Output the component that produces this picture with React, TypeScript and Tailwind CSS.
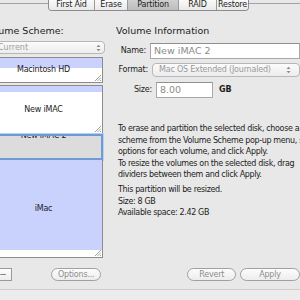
import React from 'react';

// Small resize grip drawn in the corner of each partition
const grip = (
  <svg className="absolute right-[1px] bottom-[1px]" width="7" height="7" viewBox="0 0 7 7">
    <path d="M7 1 L1 7 M7 3.5 L3.5 7 M7 6 L6 7" stroke="#8a8a8a" strokeWidth="0.8" />
  </svg>
);

function Arrows() {
  return (
    <svg width="5" height="8" viewBox="0 0 5 8">
      <path d="M0.5 3 L2.5 0.8 L4.5 3 Z M0.5 5 L2.5 7.2 L4.5 5 Z" fill="#8c8c8c" />
    </svg>
  );
}

function Pill({ label, className }: { label: string; className: string }) {
  return (
    <div
      className={`h-[13px] rounded-full border border-[#a0a0a0] bg-[linear-gradient(#fdfdfd,#ececec)] flex items-center justify-center text-[8px] tracking-[-0.2px] text-[#8e8e8e] ${className}`}
    >
      {label}
    </div>
  );
}

const tabs = [
  { name: 'First Aid', w: 'w-[46px]' },
  { name: 'Erase', w: 'w-[33px]' },
  { name: 'Partition', w: 'w-[51px]', active: true },
  { name: 'RAID', w: 'w-[38px]' },
  { name: 'Restore', w: 'w-[31px]' },
];

export default function App() {
  return (
    <div className="w-[300px] h-[300px] overflow-hidden bg-[#e8e8e8] flex flex-col font-['Lucida_Grande','DejaVu_Sans',sans-serif] text-[#1c1c1c]">
      {/* Tab bar sitting on the box border */}
      <div className="flex items-start h-[11px] shrink-0">
        <div className="w-[48px] mt-[3px] border-t border-[#a3a3a3]" />
        <div className="flex h-[11px] border border-t-0 border-[#8c8c8c] rounded-b-[4px] overflow-hidden">
          {tabs.map((t, i) => (
            <div
              key={t.name}
              className={`${t.w} flex items-center justify-center text-[8px] tracking-[-0.2px] leading-none pb-[1px] ${
                i < tabs.length - 1 ? 'border-r border-[#9a9a9a]' : ''
              } ${t.active ? 'bg-[linear-gradient(#cfcfcf,#bdbdbd)]' : 'bg-[linear-gradient(#fafafa,#e9e9e9)]'}`}
            >
              {t.name}
            </div>
          ))}
        </div>
        <div className="flex-1 mt-[3px] border-t border-[#a3a3a3]" />
      </div>

      <div className="flex h-[247px] shrink-0">
        {/* Volume scheme column */}
        <div className="ml-[-16px] w-[121px] shrink-0 flex flex-col pt-[14px]">
          <div className="h-[12px] leading-[12px] text-[9.5px] whitespace-nowrap">Volume Scheme:</div>
          <div className="mt-[4px] h-[13px] rounded-[4px] border border-[#b8b8b8] bg-[linear-gradient(#fbfbfb,#ededed)] flex items-center pl-[13px] pr-[3px] text-[8px] text-[#a0a0a0]">
            <span className="flex-1">Current</span>
            <Arrows />
          </div>

          <div className="mt-[3px] w-[119px] flex flex-col text-[8px] tracking-[-0.2px]">
            <div className="relative h-[26px] border border-[#8c8c8c] bg-[linear-gradient(#c9d1fd_10px,#ffffff_10px)] flex items-center justify-center">
              Macintosh HD
              {grip}
            </div>
            <div className="relative mt-[2px] h-[49px] border border-[#8c8c8c] bg-[linear-gradient(#c9d1fd_6px,#ffffff_6px)] flex items-center justify-center">
              New iMAC
              {grip}
            </div>
            <div className="relative h-[26px] border-2 border-[#6f9ad6] shadow-[0_0_0_1px_#b9d0f0] bg-[#dcdcdc] overflow-hidden flex justify-center">
              <span className="mt-[-5px] leading-[10px]">New iMAC 2</span>
            </div>
            <div className="relative h-[98px] border border-t-0 border-[#8c8c8c] bg-[linear-gradient(#c9d1fd_90px,#ffffff_90px)] flex items-center justify-center">
              iMac
              {grip}
            </div>
          </div>
        </div>

        {/* Volume information column */}
        <div className="ml-[11px] flex-1 flex flex-col pt-[14px] min-w-0">
          <div className="h-[12px] leading-[12px] text-[9.5px] whitespace-nowrap">Volume Information</div>

          <div className="mt-[6px] flex items-center h-[16px]">
            <div className="w-[36px] text-right text-[8px] tracking-[-0.2px]">Name:</div>
            <div className="ml-[4px] w-[150px] shrink-0 h-[16px] border border-[#a8a8a8] border-t-[#8f8f8f] bg-white flex items-center pl-[3px] text-[9.5px] text-[#8c8c8c] whitespace-nowrap">
              New iMAC 2
            </div>
          </div>

          <div className="mt-[4px] flex items-center h-[14px]">
            <div className="w-[36px] text-right text-[8px] tracking-[-0.2px]">Format:</div>
            <div className="ml-[4px] w-[148px] shrink-0 h-[14px] rounded-[4px] border border-[#b8b8b8] bg-[linear-gradient(#fbfbfb,#ececec)] flex items-center pl-[6px] pr-[8px] text-[8px] tracking-[-0.2px] text-[#9a9a9a] whitespace-nowrap">
              <span className="flex-1">Mac OS Extended (Journaled)</span>
              <Arrows />
            </div>
          </div>

          <div className="mt-[5px] flex items-center h-[16px]">
            <div className="w-[36px] text-right text-[8px] tracking-[-0.2px]">Size:</div>
            <div className="ml-[4px] w-[57px] shrink-0 h-[16px] border border-[#a8a8a8] border-t-[#8f8f8f] bg-white flex items-center pl-[3px] text-[9.5px] text-[#8c8c8c]">
              8.00
            </div>
            <div className="ml-[6px] text-[8px] font-bold">GB</div>
          </div>

          <div className="mt-[25px] pl-[2px] text-[8px] tracking-[-0.35px] leading-[11.5px] whitespace-nowrap">
            <div>To erase and partition the selected disk, choose a</div>
            <div>scheme from the Volume Scheme pop-up menu, set</div>
            <div>options for each volume, and click Apply.</div>
            <div>To resize the volumes on the selected disk, drag</div>
            <div>dividers between them and click Apply.</div>
            <div className="mt-[3.5px]">This partition will be resized.</div>
            <div>Size: 8 GB</div>
            <div>Available space: 2.42 GB</div>
          </div>
        </div>
      </div>

      {/* Buttons row */}
      <div className="mt-[10px] flex items-center h-[13px] shrink-0">
        <div className="ml-[-22px] flex">
          <div className="w-[17px] h-[13px] border border-[#9a9a9a] bg-[linear-gradient(#fdfdfd,#ececec)] flex items-center justify-center text-[9px] text-[#666]">+</div>
          <div className="w-[17px] h-[13px] border border-l-0 border-[#9a9a9a] bg-[linear-gradient(#fdfdfd,#ececec)] flex items-center justify-center text-[9px] text-[#666]">−</div>
        </div>
        <Pill label="Options..." className="ml-[39px] w-[56px]" />
        <Pill label="Revert" className="ml-[86px] w-[54px]" />
        <Pill label="Apply" className="ml-[4px] w-[60px] shrink-0" />
      </div>

      <div className="mt-[8px] flex-1 border-t border-[#cdcdcd] bg-[#ececec]" />
    </div>
  );
}
